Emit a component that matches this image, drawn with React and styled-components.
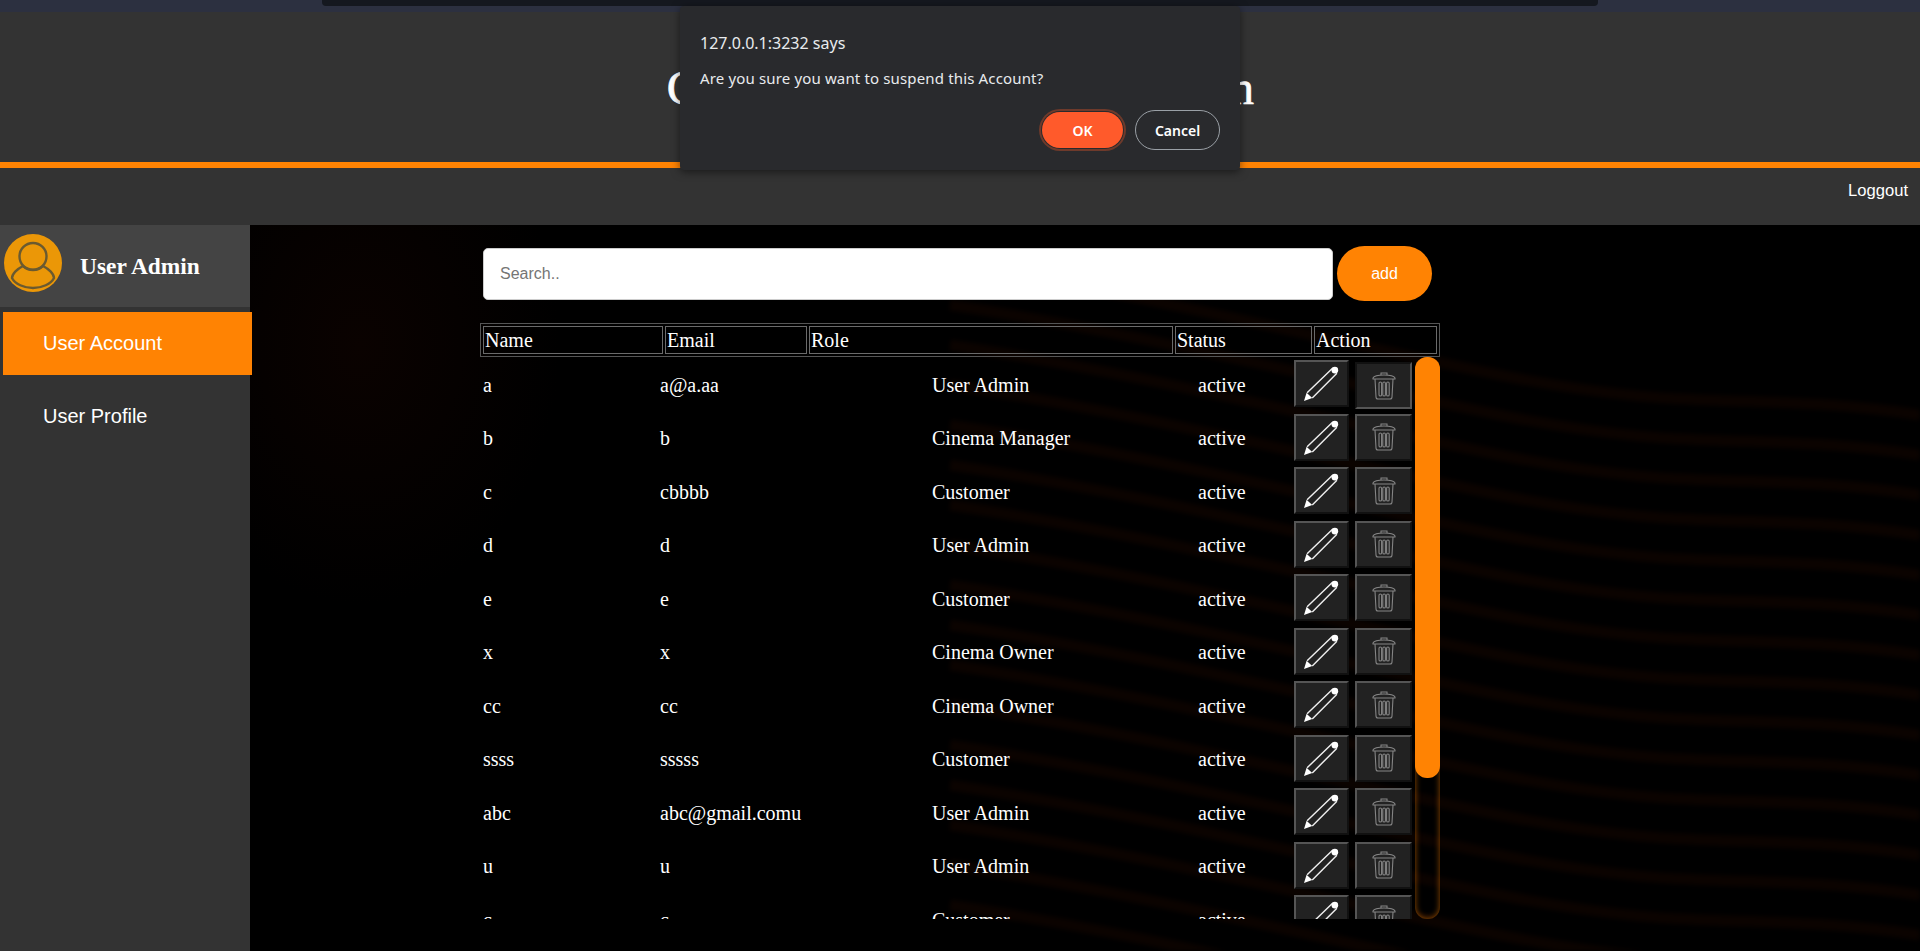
import React from "react";
import styled, { createGlobalStyle } from "styled-components";

const ORANGE = "#ff8303";

const GlobalStyle = createGlobalStyle`
  * { box-sizing: border-box; }
  html, body { margin: 0; height: 100%; overflow: hidden; background: #000; }
  body { font-family: "Liberation Sans", Arial, sans-serif; color: #fff; }
`;

const Page = styled.div`
  position: relative;
  display: flex;
  flex-direction: column;
  height: 951px;
`;

const CaptureStrip = styled.div`
  height: 12px;
  background: #2c3040;
  display: flex;
  justify-content: center;
`;

const CaptureTab = styled.div`
  width: 1276px;
  height: 6px;
  background: #15181f;
  border-radius: 0 0 4px 4px;
`;

const Header = styled.header`
  height: 156px;
  background: #333;
  border-bottom: 6px solid ${ORANGE};
  display: flex;
  align-items: center;
  justify-content: center;
`;

const Title = styled.h1`
  margin: 0;
  font: normal 48px "Liberation Serif", "Times New Roman", serif;
  letter-spacing: -0.7px;
  -webkit-text-stroke: 0.7px #fff;
  color: #fff;
`;

const Nav = styled.nav`
  height: 57px;
  background: #333;
  display: flex;
  align-items: flex-start;
  justify-content: flex-end;
  padding: 14px 12px 0 0;
`;

const NavLink = styled.a`
  font-size: 16.6px;
  line-height: 18px;
  color: #fff;
`;

const Body = styled.div`
  flex: 1;
  display: flex;
  min-height: 0;
`;

const Sidebar = styled.aside`
  width: 250px;
  flex-shrink: 0;
  background: #333;
  position: relative;
  z-index: 2;
`;

const Profile = styled.div`
  height: 82px;
  background: #444;
  display: flex;
  align-items: center;
  gap: 18px;
  padding-left: 4px;
  margin-bottom: 5px;
`;

const AvatarSvg = styled.svg`
  width: 58px;
  height: 58px;
  margin-bottom: 6px;
`;

const ProfileName = styled.span`
  padding-top: 1px;
  font: bold 23.4px "Liberation Serif", "Times New Roman", serif;
  color: #fff;
`;

const MenuItem = styled.a`
  display: flex;
  align-items: center;
  width: 249px;
  height: 63px;
  margin: 0 0 10px 3px;
  padding-left: 40px;
  font-size: 20px;
  color: #fff;
  background: ${(p) => (p.$active ? ORANGE : "transparent")};
`;

const Main = styled.main`
  flex: 1;
  position: relative;
  overflow: hidden;
  background: radial-gradient(ellipse 200px 260px at 110px 120px, #0a0200, #000);
  padding: 21px 0 0 230px;
`;

const Waves = styled.svg`
  position: absolute;
  left: 0;
  top: 0;
  width: 100%;
  height: 100%;
  filter: blur(2px);
  pointer-events: none;
`;

const Panel = styled.div`
  position: relative;
  width: 960px;
`;

const SearchRow = styled.div`
  display: flex;
  align-items: center;
  gap: 4px;
  padding-left: 3px;
  margin-bottom: 22px;
`;

const SearchInput = styled.input`
  width: 850px;
  height: 52px;
  padding: 0 16px;
  border: 1px solid #ccc;
  border-radius: 5px;
  background: #fff;
  font: 16px "Liberation Sans", Arial, sans-serif;
  &::placeholder { color: #757575; }
`;

const AddButton = styled.button`
  width: 95px;
  height: 55px;
  border: 0;
  border-radius: 28px;
  background: ${ORANGE};
  color: #fff;
  font: 16px "Liberation Sans", Arial, sans-serif;
`;

const HeadTable = styled.table`
  width: 960px;
  height: 34px;
  table-layout: fixed;
  border: 1px solid #555;
  border-spacing: 2px;
  font: 20px "Liberation Serif", "Times New Roman", serif;
`;

const HeadCell = styled.th`
  width: ${(p) => p.$w}px;
  height: 28px;
  padding: 0 1px;
  border: 1px solid #6a6a6a;
  font-weight: normal;
  text-align: left;
  line-height: 24px;
  color: #fff;
`;

const TableBody = styled.div`
  position: relative;
  height: 562px;
`;

const Rows = styled.div`
  height: 100%;
  overflow: hidden;
`;

const Row = styled.div`
  display: grid;
  grid-template-columns: 177px 272px 266px 96px 61px 57px;
  align-items: center;
  height: 53.5px;
  padding-left: 3px;
  font: 20px "Liberation Serif", "Times New Roman", serif;
  color: #fff;
`;

const Cell = styled.span`
  padding-top: 3px;
`;

const IconButton = styled.button`
  width: ${(p) => p.$w}px;
  height: 47px;
  padding: 0;
  display: flex;
  align-items: center;
  justify-content: center;
  background: #222;
  border: 2px solid;
  border-color: ${(p) => (p.$pressed ? "#111 #555 #555 #111" : "#555 #111 #111 #555")};
  margin-top: ${(p) => (p.$pressed ? "4px" : "0")};
`;

const ScrollTrack = styled.div`
  position: absolute;
  right: 0;
  top: 0;
  width: 25px;
  height: 562px;
  border-radius: 12px;
  box-shadow: inset 0 0 6px rgba(255, 131, 3, 0.6);
`;

const ScrollThumb = styled.div`
  height: 421px;
  border-radius: 12px;
  background: ${ORANGE};
`;

const Dialog = styled.div`
  position: absolute;
  left: 680px;
  top: 6px;
  width: 560px;
  height: 164px;
  padding: 26px 20px 0;
  background: #292a2d;
  border-radius: 4px;
  box-shadow: 0 2px 8px rgba(0, 0, 0, 0.5);
  font-family: "Noto Sans", "Open Sans", sans-serif;
  z-index: 5;
`;

const DialogOrigin = styled.div`
  font-size: 16px;
  line-height: 22px;
  color: #e8eaed;
`;

const DialogMessage = styled.div`
  margin-top: 14px;
  font-size: 15px;
  letter-spacing: 0.15px;
  line-height: 20px;
  color: #e8eaed;
`;

const DialogActions = styled.div`
  position: absolute;
  top: 104px;
  right: 20px;
  display: flex;
  align-items: center;
  gap: 12px;
`;

const OkButton = styled.button`
  width: 81px;
  height: 36px;
  border: 0;
  border-radius: 18px;
  background: #ff5a2b;
  box-shadow: 0 0 0 1px #292a2d, 0 0 0 3px #6e3a2b;
  color: #fff;
  font: 600 14px "Noto Sans", sans-serif;
`;

const CancelButton = styled.button`
  width: 85px;
  height: 40px;
  border: 1px solid #9aa0a6;
  border-radius: 20px;
  background: transparent;
  color: #fff;
  font: 600 14px "Noto Sans", sans-serif;
`;

const accounts = [
  ["a", "a@a.aa", "User Admin"],
  ["b", "b", "Cinema Manager"],
  ["c", "cbbbb", "Customer"],
  ["d", "d", "User Admin"],
  ["e", "e", "Customer"],
  ["x", "x", "Cinema Owner"],
  ["cc", "cc", "Cinema Owner"],
  ["ssss", "sssss", "Customer"],
  ["abc", "abc@gmail.comu", "User Admin"],
  ["u", "u", "User Admin"],
  ["c", "c", "Customer"],
  ["f", "f", "Customer"],
  ["g", "g", "Customer"],
  ["h", "h", "Customer"],
];

const Avatar = () => (
  <AvatarSvg viewBox="0 0 58 58">
    <circle cx="29" cy="29" r="29" fill="#eb9707" />
    <circle cx="29" cy="22.5" r="13.5" fill="none" stroke="#6a5a30" strokeWidth="2.4" />
    <path d="M19 32 C13 35 8 40 8 44 C11 50 20 54 29 54 C38 54 47 50 50 44 C50 40 45 35 39 32 C33 37 25 37 19 32 Z" fill="none" stroke="#6a5a30" strokeWidth="2.4" />
  </AvatarSvg>
);

const PencilIcon = () => (
  <svg width="37" height="37" viewBox="0 0 36 36">
    <path d="M4 27 L29 3 M9 32 L33 8" stroke="#eee" strokeWidth="1.4" fill="none" />
    <path d="M1 35 L3.5 27 L9 32 Z" fill="#fff" />
    <circle cx="31" cy="5" r="3.2" fill="#fff" />
  </svg>
);

const TrashIcon = () => (
  <svg width="24" height="28" viewBox="0 0 24 28" fill="none" stroke="#858585" strokeWidth="1.1">
    <path d="M9 3 V1 H15 V3" />
    <path d="M1 6 C2 4 6 3 12 3 C18 3 22 4 23 6 V7 H1 Z" />
    <path d="M3 7 L4 25 C4 26.5 5 27 6 27 H18 C19 27 20 26.5 20 25 L21 7" />
    <rect x="7" y="10" width="2.6" height="14" rx="1.3" />
    <rect x="10.8" y="10" width="2.6" height="14" rx="1.3" />
    <rect x="14.6" y="10" width="2.6" height="14" rx="1.3" />
  </svg>
);

// faint streaks of the page's background picture
const wavePaths = Array.from({ length: 17 }, (_, i) => {
  const y = 40 + i * 40;
  return `M700 ${y} C900 ${y + 30} 1050 ${y + 70} 1250 ${y + 110} S1500 ${y + 125} 1670 ${y + 150}`;
});

const App = () => (
  <Page>
    <GlobalStyle />
    <CaptureStrip>
      <CaptureTab />
    </CaptureStrip>
    <Header>
      <Title>Cinema Theatre Administration</Title>
    </Header>
    <Nav>
      <NavLink>Loggout</NavLink>
    </Nav>
    <Body>
      <Sidebar>
        <Profile>
          <Avatar />
          <ProfileName>User Admin</ProfileName>
        </Profile>
        <MenuItem $active>User Account</MenuItem>
        <MenuItem>User Profile</MenuItem>
      </Sidebar>
      <Main>
        <Waves viewBox="0 0 1670 726" preserveAspectRatio="none">
          {wavePaths.map((d) => (
            <path key={d} d={d} fill="none" stroke="#0b0300" strokeWidth="11" />
          ))}
        </Waves>
        <Panel>
          <SearchRow>
            <SearchInput placeholder="Search.." />
            <AddButton>add</AddButton>
          </SearchRow>
          <HeadTable>
            <thead>
              <tr>
                <HeadCell $w={180}>Name</HeadCell>
                <HeadCell $w={142}>Email</HeadCell>
                <HeadCell $w={364}>Role</HeadCell>
                <HeadCell $w={137}>Status</HeadCell>
                <HeadCell $w={123}>Action</HeadCell>
              </tr>
            </thead>
          </HeadTable>
          <TableBody>
            <Rows>
              {accounts.map(([name, email, role], i) => (
                <Row key={i}>
                  <Cell>{name}</Cell>
                  <Cell>{email}</Cell>
                  <Cell>{role}</Cell>
                  <Cell>active</Cell>
                  <IconButton $w={55}><PencilIcon /></IconButton>
                  <IconButton $w={57} $pressed={i === 0}><TrashIcon /></IconButton>
                </Row>
              ))}
            </Rows>
            <ScrollTrack>
              <ScrollThumb />
            </ScrollTrack>
          </TableBody>
        </Panel>
      </Main>
    </Body>
    <Dialog>
      <DialogOrigin>127.0.0.1:3232 says</DialogOrigin>
      <DialogMessage>Are you sure you want to suspend this Account?</DialogMessage>
      <DialogActions>
        <OkButton>OK</OkButton>
        <CancelButton>Cancel</CancelButton>
      </DialogActions>
    </Dialog>
  </Page>
);

export default App;
